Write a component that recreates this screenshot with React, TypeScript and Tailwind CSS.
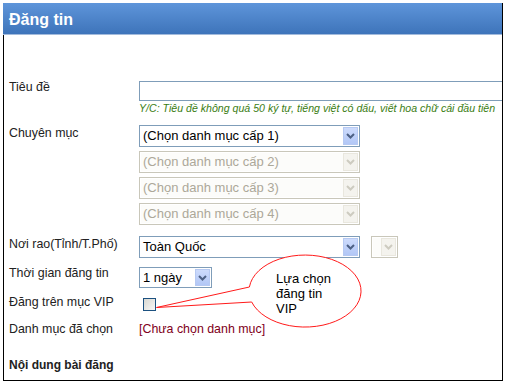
import React from 'react';

const Chevron = ({ color }: { color: string }) => (
  <svg width="9" height="6" viewBox="0 0 9 6">
    <polyline points="1,1 4.5,4.5 8,1" fill="none" stroke={color} strokeWidth="2" />
  </svg>
);

interface SelectProps {
  text?: string;
  className: string;
  disabled?: boolean;
}

const Select: React.FC<SelectProps> = ({ text, className, disabled }) => (
  <div
    className={`flex border bg-white p-px ${disabled ? 'border-[#c9c7ba]' : 'border-[#7f9db9]'} ${className}`}
  >
    <div
      className={`flex-1 overflow-hidden whitespace-nowrap pl-[2px] text-[13px] leading-[18px] ${
        disabled ? 'text-[#aca899] bg-[#fcfcfa]' : 'text-black'
      }`}
    >
      {text}
    </div>
    <div
      className={`flex w-[15px] shrink-0 items-center justify-center border ${
        disabled
          ? 'border-[#e9e7de] bg-[#f4f3ee]'
          : 'border-[#b6c9f2] bg-gradient-to-b from-[#cddbfc] to-[#b2c7f6]'
      }`}
    >
      <Chevron color={disabled ? '#cdcbc0' : '#4d6185'} />
    </div>
  </div>
);

const Label: React.FC<{ children: React.ReactNode; className?: string }> = ({ children, className = '' }) => (
  <div className={`w-[130px] shrink-0 text-[12.4px] leading-[14px] text-[#222] ${className}`}>{children}</div>
);

export default function App() {
  return (
    <div className="relative h-[385px] w-[506px] bg-white pl-[3px] pt-[3px] font-['Liberation_Sans',Arial,sans-serif]">
      <div className="flex h-[378px] w-[500px] flex-col overflow-hidden border-b border-r border-black">
        <div className="h-[32px] shrink-0 border-b border-[#a3bbdc] bg-gradient-to-b from-[#5e95da] to-[#3e74ba] pl-[6px] text-[16px] font-bold leading-[33px] text-white">
          Đăng tin
        </div>

        <div className="flex flex-1 flex-col border-l border-black pl-[5px]">
          {/* Tiêu đề */}
          <div className="mt-[45px] flex">
            <Label>Tiêu đề</Label>
            <div className="flex flex-col pt-[1px]">
              <div className="h-[20px] w-[380px] border border-[#7f9db9] bg-white" />
              <div className="mt-[1px] whitespace-nowrap text-[10.6px] italic leading-[13px] text-[#3a7d12]">
                Y/C: Tiêu đề không quá 50 ký tự, tiếng việt có dấu, viết hoa chữ cái đầu tiên
              </div>
            </div>
          </div>

          {/* Chuyên mục */}
          <div className="mt-[10px] flex">
            <Label className="pt-[1px]">Chuyên mục</Label>
            <div className="flex flex-col gap-[4px]">
              <Select className="h-[22px] w-[221px]" text="(Chọn danh mục cấp 1)" />
              <Select className="h-[22px] w-[221px]" text="(Chọn danh mục cấp 2)" disabled />
              <Select className="h-[22px] w-[221px]" text="(Chọn danh mục cấp 3)" disabled />
              <Select className="h-[22px] w-[221px]" text="(Chọn danh mục cấp 4)" disabled />
            </div>
          </div>

          {/* Nơi rao */}
          <div className="mt-[11px] flex">
            <Label className="pt-[1px]">Nơi rao(Tỉnh/T.Phố)</Label>
            <div className="flex gap-[11px]">
              <Select className="h-[22px] w-[221px]" text="Toàn Quốc" />
              <Select className="h-[22px] w-[27px]" disabled />
            </div>
          </div>

          {/* Thời gian */}
          <div className="mt-[8px] flex">
            <Label>Thời gian đăng tin</Label>
            <div className="pt-[1px]">
              <Select className="h-[21px] w-[73px]" text="1 ngày" />
            </div>
          </div>

          {/* VIP */}
          <div className="mt-[7px] flex">
            <Label>Đăng trên mục VIP</Label>
            <div className="pl-[4px] pt-[3px]">
              <div className="h-[13px] w-[13px] border border-[#1c5180] bg-gradient-to-br from-[#d8d8d2] to-[#f8f8f6]" />
            </div>
          </div>

          {/* Danh mục đã chọn */}
          <div className="mt-[11px] flex">
            <Label>Danh mục đã chọn</Label>
            <div className="text-[12.4px] leading-[14px] text-[#800020]">[Chưa chọn danh mục]</div>
          </div>

          {/* Nội dung */}
          <div className="mt-[22px] text-[12px] font-bold leading-[14px] text-[#222]">Nội dung bài đăng</div>
        </div>
      </div>

      {/* callout */}
      <svg className="pointer-events-none absolute left-0 top-0" width="506" height="385" viewBox="0 0 506 385">
        <path
          d="M 249.4 287 L 156.5 307.5 L 251.7 302 A 56 36 0 1 0 249.4 287 Z"
          fill="white"
          stroke="#ff1a1a"
          strokeWidth="1"
        />
      </svg>
      <div className="absolute left-[276px] top-[271px] text-[13px] leading-[15px] text-black">
        Lựa chọn
        <br />
        đăng tin
        <br />
        VIP
      </div>
    </div>
  );
}
